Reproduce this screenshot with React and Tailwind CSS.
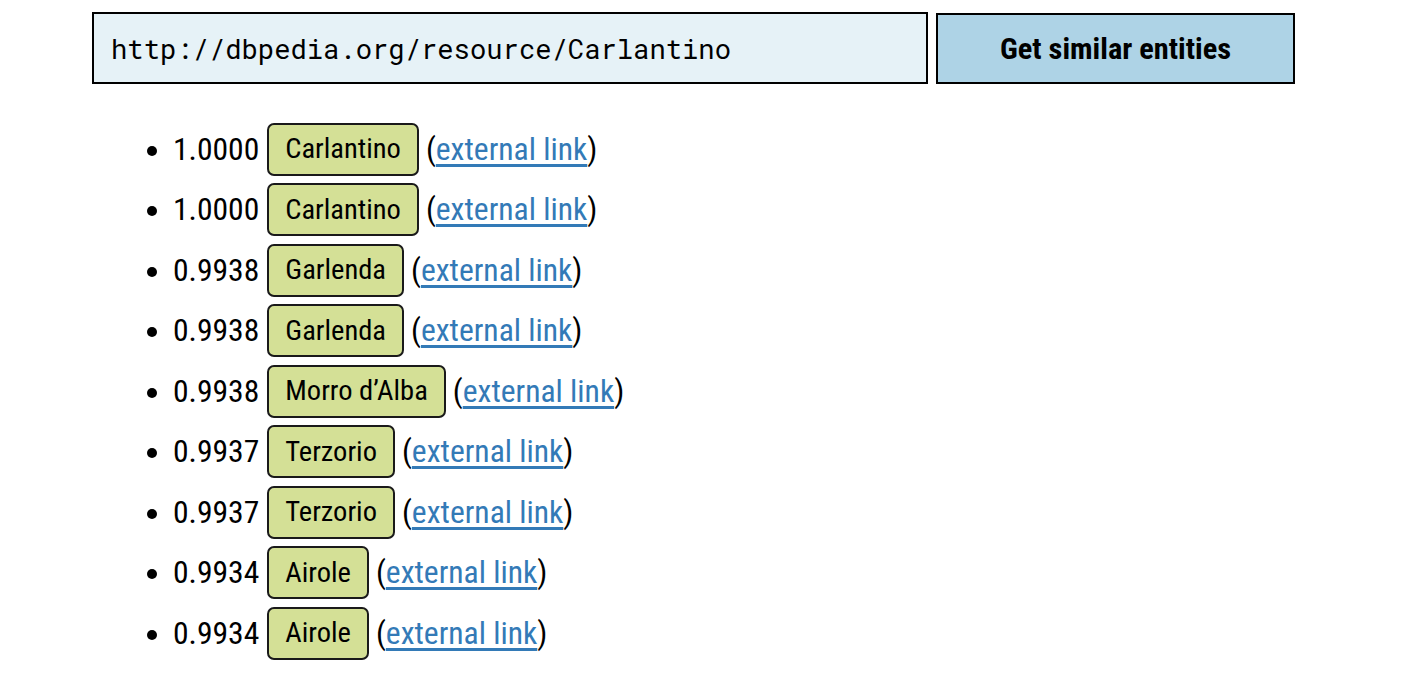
const rows = [
  ["1.0000", "Carlantino"],
  ["1.0000", "Carlantino"],
  ["0.9938", "Garlenda"],
  ["0.9938", "Garlenda"],
  ["0.9938", "Morro d’Alba"],
  ["0.9937", "Terzorio"],
  ["0.9937", "Terzorio"],
  ["0.9934", "Airole"],
  ["0.9934", "Airole"],
];

const cond = { fontFamily: '"Roboto Condensed", "Liberation Sans Narrow", Roboto, sans-serif' };

export default function App() {
  return (
    <div className="min-h-[686px] bg-white text-black" style={cond}>
      <div className="flex gap-[8px] pl-[92px] pt-[12px]">
        <div className="flex h-[72px] w-[836px] items-center border-2 border-black bg-[#e6f2f7] pl-[17px] text-[27.2px] font-['Roboto_Mono','DejaVu_Sans_Mono',monospace]">
          http://dbpedia.org/resource/Carlantino
        </div>
        <button className="mt-[1px] h-[71px] w-[359px] border-2 border-black bg-[#aed3e6] text-[30.4px] font-bold">
          Get similar entities
        </button>
      </div>
      <ul className="mt-[35px] list-disc pl-[173px] text-[31.6px]">
        {rows.map(([score, name], i) => (
          <li key={i} className="h-[60.5px]">
            <div className="flex h-full items-center">
              <span>{score}</span>
              <span className="ml-[8px] flex h-[53px] items-center rounded-[7px] border-2 border-[#1a1a1a] bg-[#d4e096] px-[16px] pt-[1px] text-[28.5px]">
                {name}
              </span>
              <span className="ml-[7px]">
                (<a href="#" className="text-[#337ab7] underline underline-offset-[4px]">external link</a>)
              </span>
            </div>
          </li>
        ))}
      </ul>
    </div>
  );
}
